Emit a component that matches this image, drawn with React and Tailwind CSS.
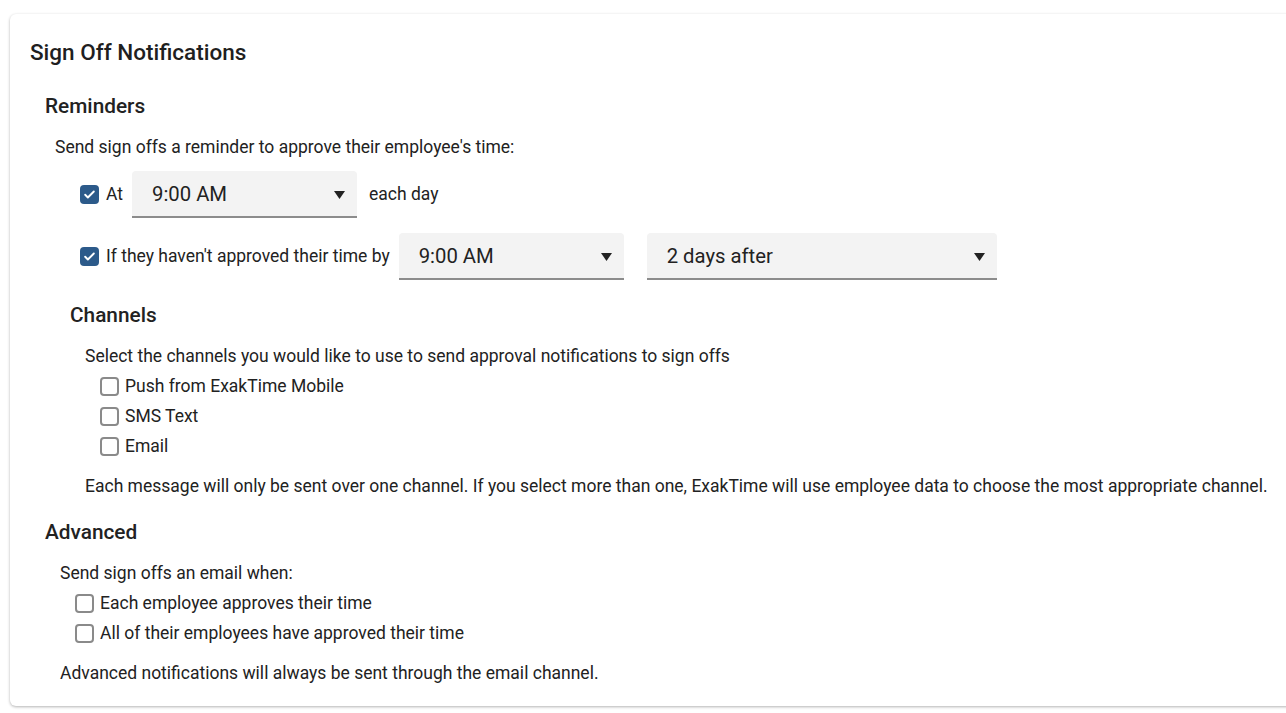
import { useState } from 'react';

function Check({ checked, onChange }) {
  return (
    <button
      type="button"
      onClick={onChange}
      className={`w-[19px] h-[19px] shrink-0 rounded-[4px] flex items-center justify-center ${
        checked ? 'bg-[#2c5a8a]' : 'border-2 border-[#8a8a8a] bg-white'
      }`}
    >
      {checked && (
        <svg width="13" height="13" viewBox="0 0 24 24" fill="none" stroke="white" strokeWidth="3.5" strokeLinecap="round" strokeLinejoin="round">
          <path d="M4 12.5l5 5L20 6.5" />
        </svg>
      )}
    </button>
  );
}

function Select({ value, width }) {
  return (
    <div className={`${width} h-[47px] bg-[#f3f3f3] rounded-t-[4px] border-b-2 border-[#8c8c8c] flex items-center justify-between pl-5 pr-[12px] pt-[2px]`}>
      <span className="text-[20.3px] text-[#222]">{value}</span>
      <svg width="11" height="8" viewBox="0 0 11 8"><path d="M0 0h11L5.5 8z" fill="#222" /></svg>
    </div>
  );
}

export default function App() {
  const [checks, setChecks] = useState({ at: true, by: true, push: false, sms: false, email: false, each: false, all: false });
  const toggle = (k) => setChecks((s) => ({ ...s, [k]: !s[k] }));

  return (
    <div className="min-h-[713px] bg-white pt-[14px] pl-[10px] overflow-hidden" style={{ fontFamily: 'Roboto, sans-serif' }}>
      <div className="w-[1300px] h-[692px] bg-white rounded-[6px] shadow-[0_1px_3px_rgba(0,0,0,0.3)] pl-5 pt-[26px] text-[17.5px] text-[#222]">
        {/* Header */}
        <h1 className="text-[22.5px] font-medium leading-6 text-[#1f1f1f]">Sign Off Notifications</h1>

        {/* Reminders */}
        <div className="pl-[15px] mt-[30px]">
          <h2 className="text-[20.8px] font-medium leading-6">Reminders</h2>
          <p className="ml-[10px] mt-[17px] leading-6">Send sign offs a reminder to approve their employee's time:</p>

          <div className="ml-[35px] mt-[12px] flex items-center h-[47px]">
            <Check checked={checks.at} onChange={() => toggle('at')} />
            <span className="ml-[7px] mr-[9px]">At</span>
            <Select value="9:00 AM" width="w-[225px]" />
            <span className="ml-[12px]">each day</span>
          </div>

          <div className="ml-[35px] mt-[15px] flex items-center h-[47px]">
            <Check checked={checks.by} onChange={() => toggle('by')} />
            <span className="ml-[7px] mr-[9px]">If they haven't approved their time by</span>
            <Select value="9:00 AM" width="w-[225px]" />
            <div className="ml-[23px]">
              <Select value="2 days after" width="w-[350px]" />
            </div>
          </div>

          {/* Channels */}
          <div className="ml-[25px] mt-[23px]">
            <h2 className="text-[20.8px] font-medium leading-6">Channels</h2>
            <p className="ml-[15px] mt-[17px] leading-6">Select the channels you would like to use to send approval notifications to sign offs</p>
            <div className="ml-[30px] mt-[6px] flex flex-col gap-[6px]">
              {[
                ['push', 'Push from ExakTime Mobile'],
                ['sms', 'SMS Text'],
                ['email', 'Email'],
              ].map(([k, label]) => (
                <label key={k} className="flex items-center gap-[6px] h-6">
                  <Check checked={checks[k]} onChange={() => toggle(k)} />
                  <span>{label}</span>
                </label>
              ))}
            </div>
            <p className="ml-[15px] mt-[16px] leading-6 whitespace-nowrap">
              Each message will only be sent over one channel. If you select more than one, ExakTime will use employee data to choose the most appropriate channel.
            </p>
          </div>

          {/* Advanced */}
          <h2 className="text-[20.8px] font-medium leading-6 mt-[22px]">Advanced</h2>
          <p className="ml-[15px] mt-[17px] leading-6">Send sign offs an email when:</p>
          <div className="ml-[30px] mt-[6px] flex flex-col gap-[6px]">
            {[
              ['each', 'Each employee approves their time'],
              ['all', 'All of their employees have approved their time'],
            ].map(([k, label]) => (
              <label key={k} className="flex items-center gap-[6px] h-6">
                <Check checked={checks[k]} onChange={() => toggle(k)} />
                <span>{label}</span>
              </label>
            ))}
          </div>
          <p className="ml-[15px] mt-[16px] leading-6">Advanced notifications will always be sent through the email channel.</p>
        </div>
      </div>
    </div>
  );
}
